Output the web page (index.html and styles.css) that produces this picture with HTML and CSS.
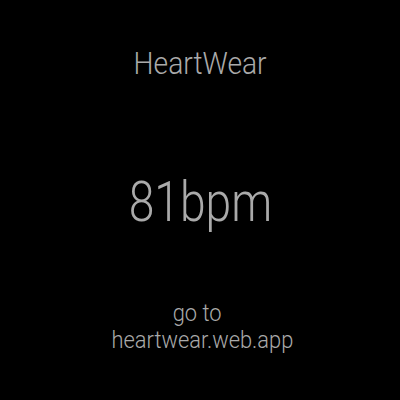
FILE: index.html
```html
<!DOCTYPE html>
<html>
<head>
<meta charset="utf-8">
<link rel="stylesheet" href="styles.css">
</head>
<body>
<main class="watch">
  <div class="title">HeartWear</div>
  <div class="rate">81bpm</div>
  <div class="link">go to&nbsp;<br>&nbsp;heartwear.web.app</div>
</main>
</body>
</html>
```

FILE: styles.css
```css
html, body {
  margin: 0;
  padding: 0;
  background: #000;
}
.watch {
  width: 400px;
  height: 400px;
  display: flex;
  flex-direction: column;
  align-items: center;
  font-family: Roboto, "Liberation Sans", sans-serif;
  font-weight: 300;
  color: #aaaaaa;
  text-align: center;
}
.title {
  font-size: 31px;
  line-height: 36px;
  margin-top: 46px;
  transform: scaleX(0.91);
}
.rate {
  font-size: 55px;
  line-height: 60px;
  margin-top: 90px;
  transform: scaleX(0.84);
}
.link {
  font-size: 24px;
  line-height: 27px;
  margin-top: 68px;
  transform: scaleX(0.91);
}
```
